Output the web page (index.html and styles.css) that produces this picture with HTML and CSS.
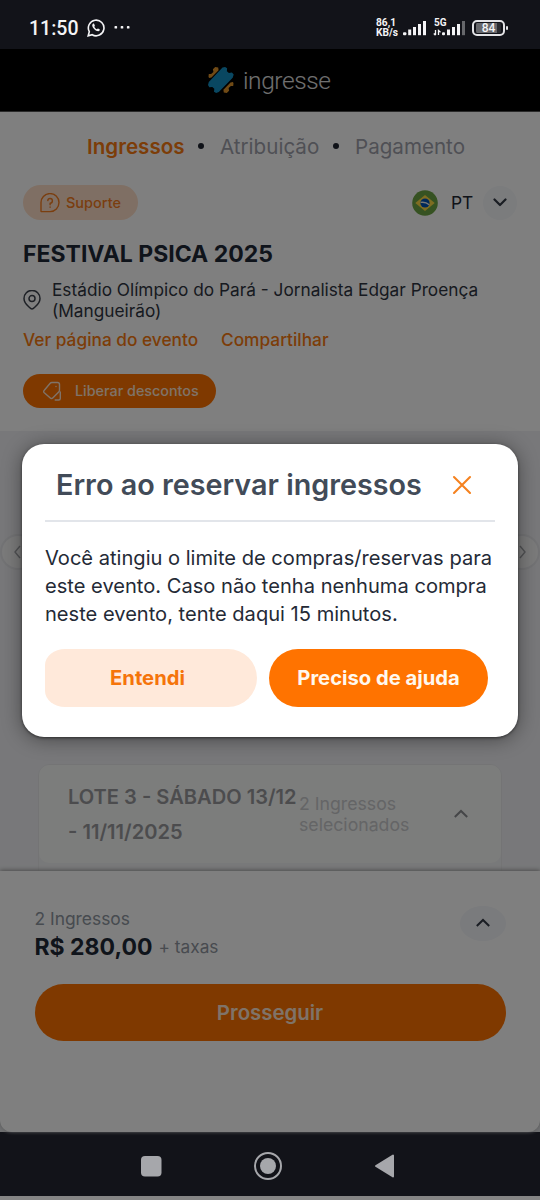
FILE: index.html
```html
<!DOCTYPE html>
<html lang="pt-BR">
<head>
<meta charset="utf-8">
<title>Ingresse</title>
<link rel="stylesheet" href="styles.css">
</head>
<body>
<div class="phone">
  <div class="status">
    <span class="clock">11:50</span>
    <svg class="whatsapp" width="18" height="18" viewBox="0 0 18 18"><path d="M1.2 16.8l1.1-4.1a7.8 7.8 0 1 1 2.9 3z" fill="none" stroke="#f4f4f6" stroke-width="1.6"/><path d="M6 4.7c-1.5 1-.8 3.3 1.1 5.300s4.500 3 5.500 1.600c.5-.8.3-1.200-.2-1.400l-1.300-.6c-.4-.2-.6 0-1.100.7-1.300-.5-2.200-1.400-2.700-2.600.6-.6.700-.8.500-1.200L7.200 5c-.2-.4-.7-.5-1.200-.3z" fill="#f4f4f6"/></svg>
    <svg class="dots" width="16" height="3" viewBox="0 0 16 3" fill="#f4f4f6"><rect x=".5" width="2.600" height="2.600" rx=".7"/><rect x="6.700" width="2.600" height="2.600" rx=".7"/><rect x="12.900" width="2.600" height="2.600" rx=".7"/></svg>
    <span class="speed">86,1<br>KB/s</span>
    <svg class="signal" width="24" height="17" viewBox="0 0 24 17" fill="#f4f4f6"><rect x="0" y="12.200" width="3.400" height="3" rx="1"/><rect x="5.200" y="9.500" width="3" height="5.700"/><rect x="10" y="7" width="3" height="8.200"/><rect x="15" y="4" width="3" height="11.200"/><rect x="20" y="1" width="3" height="14.200"/></svg>
    <div class="five"><span>5G</span>
      <svg width="34" height="17" viewBox="0 0 34 17" fill="#f4f4f6"><path d="M2.500 10v5M.8 13.500l1.700 1.800M5.500 15v-4.500l2 1.700" stroke="#f4f4f6" stroke-width="1.300" fill="none"/><rect x="9" y="12.200" width="3" height="3" rx="1"/><rect x="14" y="9.500" width="3" height="5.700"/><rect x="19" y="7" width="3" height="8.200"/><rect x="24" y="4" width="3" height="11.200"/><rect x="29" y="1" width="3" height="14.200" fill="#66676b"/></svg>
    </div>
    <div class="battery"><span>84</span></div>
  </div>

  <div class="app">
    <header class="brand">
      <svg width="28" height="28" viewBox="0 0 28 28"><path fill="#e0942a" d="M1.500 10.500l.3-2.600 2.300.2 2.300-2.200-.5-2.600L8.200 1l3 .4.4 2.800L4.500 11.500l-2.500.6zM26.500 17.500l-.3 2.600-2.300-.2-2.300 2.200.5 2.600-2.300 2.300-3-.4-.4-2.800 7.100-7.300 2.500-.6z"/><path fill="#128ec2" d="M15.500 1.500l2.600-.5 2 1.200-.2 3 2 1.800 3-.5 1.800 2-1 3.200L11.800 26l-2.600 1-2.200-1.200.3-3-2-1.800-3 .3L1 19l.8-3z"/></svg>
      <span>ingresse</span>
    </header>

    <section class="intro">
      <nav class="steps"><b>Ingressos</b><i></i><span class="s2">Atribuição</span><i></i><span class="s3">Pagamento</span></nav>
      <div class="tools">
        <div class="support"><svg width="20" height="20" viewBox="0 0 20 20" fill="none" stroke="#f57c1e" stroke-width="1.400" stroke-linecap="round" stroke-linejoin="round"><path d="M1 18.200V10a9 9 0 1 1 9 8.600H1.600q-.6 0-.6-.4z"/><path d="M7.800 7.600a2.300 2.300 0 1 1 2.300 2.500v1.600M10.100 14v.2"/></svg><span>Suporte</span></div>
        <div class="lang">
          <svg width="26" height="26" viewBox="0 0 26 26"><circle cx="13" cy="13" r="12.800" fill="#6da544"/><path fill="#ffda44" d="M13 5l9.700 8L13 21l-9.700-8z"/><circle cx="13" cy="13" r="4.600" fill="#0052b4"/><path fill="none" stroke="#f0f0f0" stroke-width="1.300" d="M8.600 12.400q5-.8 8.600 2.300"/></svg>
          <span>PT</span>
          <div class="round"><svg width="14" height="9" viewBox="0 0 14 9"><path d="M1.500 1.500L7 7l5.500-5.500" fill="none" stroke="#343a46" stroke-width="2.200" stroke-linecap="round" stroke-linejoin="round"/></svg></div>
        </div>
      </div>
      <h1>FESTIVAL PSICA 2025</h1>
      <div class="place">
        <svg width="18" height="20" viewBox="0 0 18 20" fill="none" stroke="#3c424d" stroke-width="1.500" stroke-linejoin="round"><path d="M9 19q-1 0-3-2-5-4.500-5-8.600a8 8 0 0 1 16 0q0 4.100-5 8.600-2 2-3 2z"/><circle cx="9" cy="8.600" r="3"/></svg>
        <p><span>Estádio Olímpico do Pará - Jornalista Edgar Proença</span><br><span>(Mangueirão)</span></p>
      </div>
      <div class="links"><span class="l1">Ver página do evento</span><span>Compartilhar</span></div>
      <div class="promo"><svg width="20" height="20" viewBox="0 0 20 20" fill="none" stroke="#ffe6d2" stroke-width="1.400" stroke-linecap="round" stroke-linejoin="round"><path d="M9.800 1.500h5.700Q17.500 1.500 17.500 3.500v5.700q0 1-.8 1.800l-6 6q-1.200 1.200-2.400 0l-6-5.200q-1.300-1.300 0-2.600L8.200 2.300q.7-.8 1.600-.8z"/><path d="M18.300 11v6.500q0 1.500-1.500 1.500H13.200"/><path d="M14 5.500v.1"/></svg><span>Liberar descontos</span></div>
    </section>

    <section class="tickets">
      <div class="arrow left"><svg width="10" height="14" viewBox="0 0 10 14"><path d="M7 1L2 7l5 6" fill="none" stroke="#a2a4a8" stroke-width="1.400"/></svg></div>
      <div class="arrow right"><svg width="10" height="14" viewBox="0 0 10 14"><path d="M3 1l5 6-5 6" fill="none" stroke="#a2a4a8" stroke-width="1.400"/></svg></div>
      <div class="lot">
        <div class="lot-head">
          <p class="lot-name"><span>LOTE 3 - SÁBADO 13/12</span><br><span>- 11/11/2025</span></p>
          <p class="lot-sel">2 Ingressos<br>selecionados</p>
          <svg width="16" height="10" viewBox="0 0 16 10"><path d="M1.800 8L8 2l6.200 6" fill="none" stroke="#8a8c90" stroke-width="2"/></svg>
        </div>
      </div>
    </section>

    <section class="cart">
      <div class="sum">
        <div>
          <p class="count">2 Ingressos</p>
          <p class="total"><b>R$ 280,00</b><span>+ taxas</span></p>
        </div>
        <div class="oval"><svg width="16" height="10" viewBox="0 0 16 10"><path d="M1.800 8L8 2l6.200 6" fill="none" stroke="#343a46" stroke-width="2"/></svg></div>
      </div>
      <div class="go"><span>Prosseguir</span></div>
    </section>

    <div class="scrim">
      <div class="modal">
        <div class="modal-head"><h2>Erro ao reservar ingressos</h2><svg width="20" height="20" viewBox="0 0 20 20"><path d="M2 2l16 16M18 2L2 18" stroke="#f5821f" stroke-width="2.100" stroke-linecap="round"/></svg></div>
        <p class="message"><span>Você atingiu o limite de compras/reservas para</span><br><span>este evento. Caso não tenha nenhuma compra</span><br><span>neste evento, tente daqui 15 minutos.</span></p>
        <div class="actions"><div class="ok"><span>Entendi</span></div><div class="help"><span>Preciso de ajuda</span></div></div>
      </div>
    </div>
  </div>

  <div class="navbar">
    <svg width="540" height="64" viewBox="0 0 540 64" fill="#a6a7ab"><rect x="141" y="24" width="20.500" height="20.500" rx="4"/><circle cx="268" cy="34" r="13" fill="none" stroke="#a6a7ab" stroke-width="2"/><circle cx="268" cy="34" r="8"/><path d="M376 34l17-10.500v21z" stroke="#a6a7ab" stroke-width="2" stroke-linejoin="round"/></svg>
  </div>
</div>
</body>
</html>
```
FILE: styles.css
```css
* { box-sizing: border-box; margin: 0; padding: 0; }
body { width: 540px; height: 1200px; background: #858585; font-family: Inter, sans-serif; overflow: hidden; }
svg { display: block; flex: none; }
span, b, h1, h2 { white-space: nowrap; }
.phone { display: flex; flex-direction: column; width: 540px; height: 1200px; }

.status { display: flex; height: 49px; background: #121319; color: #f4f4f6; font-family: Roboto, sans-serif; padding-left: 29px; }
.clock { width: 58px; font-size: 19.500px; font-weight: 500; line-height: 24px; margin-top: 17px; }
.whatsapp { margin-top: 19px; }
.dots { margin: 26px 0 0 9px; }
.speed { margin: 18px 0 0 246px; width: 27px; font-size: 10.200px; font-weight: 700; line-height: 10.300px; }
.signal { margin-top: 20px; }
.five { position: relative; width: 34px; margin: 20px 0 0 6px; }
.five span { position: absolute; left: 1px; top: -2px; font-size: 10px; line-height: 10px; font-weight: 700; }
.battery { position: relative; width: 33px; height: 16px; margin: 20px 0 0 5px; border: 2px solid #e3e3e6; border-radius: 5px; background: linear-gradient(90deg, #66676b 21px, #2a2b30 21px) content-box; padding: 1px 2px; font-size: 12px; font-weight: 500; line-height: 11px; text-align: center; }
.battery::after { content: ""; position: absolute; right: -5px; top: 4px; width: 2px; height: 4px; background: #e3e3e6; border-radius: 1px; }

.app { position: relative; height: 1083px; flex: none; background: #dfe1e4; }
.brand { height: 63px; background: #000; display: flex; align-items: center; gap: 8px; padding-left: 207px; border-bottom: 1px solid #555; color: #e0e0e0; font: 300 24.500px/32px Roboto, sans-serif; letter-spacing: -.4px; }
.brand span { padding-top: 1px; }

.intro { height: 319px; background: #fff; padding: 20px 23px 0; }
.steps { display: flex; align-items: center; height: 28px; padding-left: 64px; color: #9fa1ab; font-size: 20.600px; }
.steps b { width: 111px; font-weight: 600; color: #f97b10; }
.steps i { width: 6px; height: 6px; border-radius: 3px; background: #1f2430; }
.steps span { margin-left: 16px; }
.s2 { width: 113px; }
.tools { display: flex; justify-content: space-between; margin-top: 25px; }
.support { width: 115px; height: 35px; border-radius: 18px; background: #ffdfc8; display: flex; align-items: center; gap: 6px; padding-left: 17px; color: #f57c1e; font-size: 14.500px; font-weight: 500; }
.lang { display: flex; align-items: center; width: 105px; color: #222733; font-size: 17.400px; }
.lang > span { margin-left: 13px; width: 32px; }
.round { width: 34px; height: 34px; border-radius: 50%; background: #f6f8fb; display: grid; place-items: center; }
h1 { margin-top: 19px; font-size: 23px; line-height: 30px; font-weight: 700; color: #1f2937; }
.place { display: flex; gap: 11px; padding-top: 10px; color: #2f3541; font-size: 17.260px; line-height: 21px; }
.place svg { margin-top: 11px; }
.links { display: flex; margin-top: 7px; font-size: 17.300px; line-height: 24px; font-weight: 500; color: #f97b10; }
.l1 { width: 198px; }
.promo { width: 193px; height: 34.500px; margin-top: 21.500px; border-radius: 18px; background: #ff7300; display: flex; align-items: center; gap: 13px; padding-left: 19px; color: #ffe6d2; font-size: 14.350px; font-weight: 500; }

.tickets { position: relative; height: 439.500px; background: #f0f1f4; padding: 333px 38px 0; overflow: hidden; }
.arrow { position: absolute; top: 103px; width: 36px; height: 36px; border: 2px solid #e6e7ea; border-radius: 50%; background: #f6f6f7; display: grid; place-items: center; }
.left { left: 0; }
.right { right: 0; }
.lot { height: 130px; border: 1.500px solid #e8e9eb; border-radius: 12px; background: #f1f2f4; }
.lot-head { display: flex; height: 98px; border-radius: 10px; background: #f9faf9; padding-left: 29px; }
.lot-name { width: 231px; padding-top: 14.500px; font-size: 20.100px; line-height: 35px; font-weight: 600; color: #98999c; }
.lot-sel { width: 154px; padding-top: 28px; font-size: 17.700px; line-height: 21px; color: #c9cacd; }
.lot-head svg { margin-top: 44px; }

.cart { position: relative; height: 261.500px; background: #fff; border-radius: 0 0 12px 12px; box-shadow: 0 -1px 4px #999; padding: 35px 34.500px 0; }
.sum { display: flex; justify-content: space-between; }
.count { margin-top: 2px; font-size: 17.400px; line-height: 22px; color: #8e96a0; }
.total { display: flex; align-items: center; height: 30px; margin-top: 2px; }
.total b { width: 124px; font-size: 23px; color: #1f2937; }
.total span { font-size: 17.300px; color: #9096a0; }
.oval { width: 46px; height: 35px; border-radius: 50%; background: #f4f6fa; display: grid; place-items: center; }
.go { height: 57.500px; margin-top: 22px; border-radius: 29px; background: #ff7300; color: #ffe6d2; display: grid; place-items: center; font-size: 20.400px; font-weight: 600; }

.scrim { position: absolute; inset: 0; background: rgba(0,0,0,.5); padding: 395px 22px 0; }
.modal { height: 293px; background: #fff; border-radius: 22px; box-shadow: 0 1px 3px rgba(0,0,0,.5), 0 2px 20px rgba(0,0,0,.42); padding: 0 23px; }
.modal-head { display: flex; height: 78px; border-bottom: 2px solid #e2e5ea; padding: 22px 23px 0 11px; justify-content: space-between; }
h2 { font-size: 28.760px; line-height: 37px; font-weight: 600; color: #424b58; }
.modal-head svg { margin-top: 9px; }
.message { padding-top: 23px; font-size: 20.100px; line-height: 27.800px; color: #242a36; }
.actions { display: flex; gap: 12px; margin-top: 20.600px; font-size: 20.200px; font-weight: 700; }
.actions div { height: 58px; display: grid; place-items: center; }
.ok { width: 212px; border-radius: 20px 29px 29px 20px / 16px 29px 29px 16px; background: #ffe9da; color: #f5740a; padding-right: 7px; }
.help { width: 219px; border-radius: 29px; background: #ff7300; color: #fff8ee; }

.navbar { height: 64px; background: #121319; }
```
